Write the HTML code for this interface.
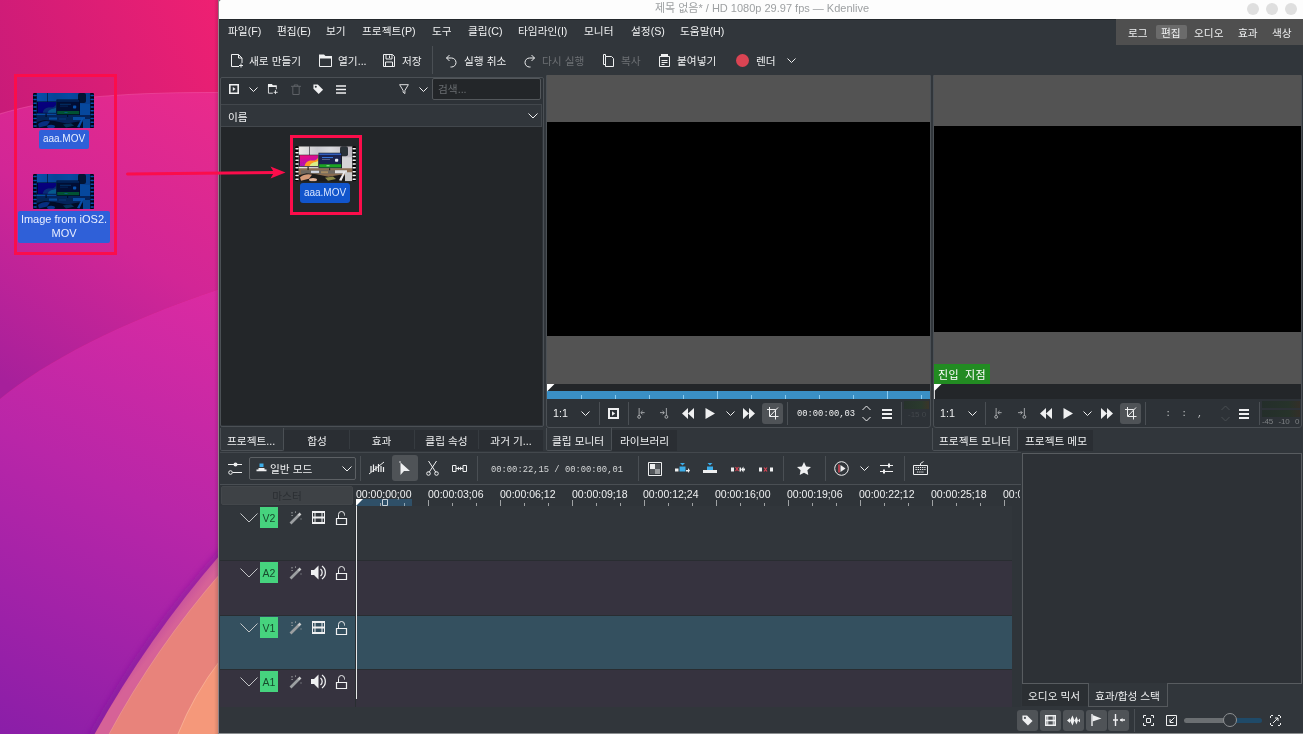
<!DOCTYPE html>
<html lang="ko">
<head>
<meta charset="utf-8">
<title>Kdenlive</title>
<style>
*{box-sizing:border-box;margin:0;padding:0}
html,body{width:1303px;height:734px;overflow:hidden;background:#31363b}
body{position:relative;font-family:"Liberation Sans","Noto Sans CJK KR",sans-serif;font-size:10.7px;color:#eff0f1}
div,span,svg{position:absolute}
svg{overflow:visible}
.t{white-space:nowrap;line-height:16px;height:16px;will-change:transform}
.dis{color:#6d7074}
.mono{font-family:"Liberation Mono","DejaVu Sans Mono",monospace;font-size:8.8px}
.sep{width:1px;background:#4a4f54}
.hl{background:#4f5357;border-radius:3px}
.frame{border:1px solid #4b5055}
.tab{height:21px;top:430px;background:#2a2e33}
.tabsel{background:#31363b;border:1px solid #4b5055;border-top:none;top:428px;height:23px;border-radius:0 0 2px 2px}
.ic{fill:none;stroke:#eff0f1;stroke-width:1}
</style>
</head>
<body>
<svg style="left:0;top:0" width="220" height="734" viewBox="0 0 220 734">
<defs>
<linearGradient id="ga" gradientUnits="userSpaceOnUse" x1="0" y1="114" x2="219" y2="0"><stop offset="0" stop-color="#c81b79"/><stop offset="1" stop-color="#ef2072"/></linearGradient>
<linearGradient id="gb" gradientUnits="userSpaceOnUse" x1="219" y1="92" x2="30" y2="399"><stop offset="0" stop-color="#ea2b8b"/><stop offset=".5" stop-color="#d22696"/><stop offset="1" stop-color="#a6209b"/></linearGradient>
<linearGradient id="gc" gradientUnits="userSpaceOnUse" x1="219" y1="289" x2="0" y2="734"><stop offset="0" stop-color="#dc2ba1"/><stop offset=".45" stop-color="#b926a8"/><stop offset="1" stop-color="#8a1ea8"/></linearGradient>
<linearGradient id="gs" gradientUnits="userSpaceOnUse" x1="140" y1="630" x2="152" y2="640"><stop offset="0" stop-color="#8a1ea0" stop-opacity="0"/><stop offset="1" stop-color="#7a1a90" stop-opacity=".55"/></linearGradient>
<linearGradient id="gp" gradientUnits="userSpaceOnUse" x1="150" y1="630" x2="163" y2="640"><stop offset="0" stop-color="#c04a9f"/><stop offset="1" stop-color="#d66297"/></linearGradient>
<filter id="b3" x="-20%" y="-20%" width="140%" height="140%"><feGaussianBlur stdDeviation="3"/></filter>
<linearGradient id="gsh" x1="0" y1="0" x2="1" y2="0"><stop offset="0" stop-color="#000" stop-opacity="0"/><stop offset="1" stop-color="#000" stop-opacity=".2"/></linearGradient>
</defs>
<rect width="220" height="734" fill="url(#ga)"/>
<path d="M0 114C40 101 110 92 220 92.500V289C120 322 45 362 0 399Z" fill="url(#gb)"/><path d="M0 114C40 101 110 92 220 92.500" fill="none" stroke="#f560b0" stroke-opacity=".45" stroke-width="1.200"/>
<path d="M0 399C45 362 120 322 220 289V734H0Z" fill="url(#gc)"/>
<path d="M222 552Q146 636 91 738" fill="none" stroke="#7c1a98" stroke-opacity=".5" stroke-width="7" filter="url(#b3)"/>
<path d="M220 555Q148 638 94.600 734H220Z" fill="url(#gp)"/>
<path d="M220 573.500Q155.500 647.500 108.700 734H220Z" fill="#ec9490"/>
<path d="M220 574.500Q156 648 109.500 734H220Z" fill="#e8837b"/>
<path d="M220 660Q193.500 694 177.500 734H220Z" fill="#f9b096"/>
<path d="M220 661Q194 695 178.500 734H220Z" fill="#f5987a"/>
<rect x="214" y="0" width="6" height="734" fill="url(#gsh)"/>
</svg>
<svg style="left:0;top:0" width="0" height="0">
<defs>
<filter id="blur" x="-5%" y="-5%" width="110%" height="110%"><feGaussianBlur stdDeviation="0.65"/></filter>
<filter id="tint" x="0" y="0" width="100%" height="100%" color-interpolation-filters="sRGB"><feColorMatrix type="matrix" values="0.03 0 0 0 0  -0.15 0.52 -0.04 0 0.01  0.30 0.08 0.26 0 0.08  0 0 0 1 0"/></filter>
<linearGradient id="mon1" x1="0" y1="0" x2="0.3" y2="1"><stop offset="0" stop-color="#f2107c"/><stop offset="1" stop-color="#a812b8"/></linearGradient>
<linearGradient id="wallg" x1="0" y1="0" x2="1" y2="0"><stop offset="0" stop-color="#ecebe8"/><stop offset=".35" stop-color="#c9c9cf"/><stop offset=".6" stop-color="#d9d9de"/><stop offset="1" stop-color="#b9b4bc"/></linearGradient>
<clipPath id="tc"><rect x="0" y="0" width="61" height="35" rx="1.500"/></clipPath>
<g id="scene" clip-path="url(#tc)">
<rect x="0" y="0" width="61" height="35" fill="#050505"/>
<g filter="url(#blur)">
<rect x="3.500" y="0" width="54" height="35" fill="url(#wallg)"/>
<rect x="14" y="0" width=".8" height="10" fill="#4a4a50"/>
<rect x="45" y="0" width="8" height="10" rx="2" fill="#2c3038"/>
<rect x="47" y="11" width="10" height="16" fill="#d4d4d6"/>
<rect x="3.500" y="22" width="54" height="13" fill="#8a6c50"/>
<rect x="4" y="8.500" width="19.500" height="12" fill="#1b1b1f"/>
<rect x="4.800" y="9" width="18.200" height="10.800" fill="url(#mon1)"/>
<path d="M9.500 19.800c1-4.500 5-6 8-5.500 2.500.3 4.500-1 5.500-2.800v8.300z" fill="#ff9a20"/>
<path d="M14.500 19.800c1.500-3 4-4 6-4 1 0 2-.5 2.500-1.200v5.200z" fill="#d8f08a"/>
<rect x="23.500" y="6.500" width="23.500" height="15.500" fill="#15181f"/>
<rect x="24.200" y="7.200" width="22" height="14" fill="#1a2450"/>
<rect x="24.200" y="7.200" width="22" height="1.500" fill="#3560c0"/>
<rect x="27" y="10.800" width="11" height="1" fill="#3a78e0"/>
<rect x="27" y="12.800" width="8" height=".6" fill="#8088a8"/>
<rect x="40" y="12.500" width="3.200" height="3" rx=".8" fill="#e8ecf4"/>
<rect x="24.200" y="18" width="22" height="3.200" fill="#1fa324"/>
<rect x="31.500" y="19" width="3" height="1" fill="#9be09c"/>
<rect x="12.500" y="20.500" width="1.200" height="3.500" fill="#222"/>
<rect x="34" y="22" width="1.200" height="3.500" fill="#222"/>
<rect x="6" y="24" width="44" height="3.500" fill="#6e6860"/>
<rect x="16" y="24.500" width="8" height="2.200" fill="#cfd6e4"/>
<rect x="26" y="25" width="7" height="2" fill="#a58a62"/>
<rect x="40" y="24" width="12" height="3" fill="#dedede"/>
<path d="M3.500 29l8-2 10 1 12 2.500 12-2 12 2v6.500h-54z" fill="#1c1c1e"/>
<path d="M5 31c3-2.500 8-4 12-2.500l-3 4-8 2z" fill="#d49a78"/>
<ellipse cx="18" cy="33.500" rx="4" ry="1.800" fill="#e0b49a"/>
<path d="M30 31.500l8-1.200 3 2.500-8 1.800z" fill="#8c8a48"/>
<path d="M44 34l5-9 1.500.5-4 9z" fill="#ececec"/>
<rect x="50" y="26" width="7" height="9" fill="#c9c9c9"/>
</g>
<rect x="0" y="0" width="3.500" height="35" fill="#050505"/>
<rect x="57.500" y="0" width="3.500" height="35" fill="#050505"/>
<path d="M1 2.600h2M1 6.400h2M1 10.200h2M1 14h2M1 17.800h2M1 21.600h2M1 25.400h2M1 29.200h2M1 33h2M58.200 2.600h2M58.200 6.400h2M58.200 10.200h2M58.200 14h2M58.200 17.800h2M58.200 21.600h2M58.200 25.400h2M58.200 29.200h2M58.200 33h2" stroke="#f4f4f4" stroke-width="1.500" stroke-linecap="round" fill="none"/>
</g>
</defs>
</svg>
<!--WALL-->
<div id="win" style="left:219px;top:0;width:1084px;height:734px;background:#31363b"></div>
<div style="left:218px;top:0;width:1px;height:734px;background:#8f8388"></div>
<div style="left:219px;top:0;width:1084px;height:19px;background:#fdfdfd;border-top-left-radius:2px"></div>
<div style="left:219px;top:19px;width:1084px;height:1px;background:#24282c"></div>
<div class="t" style="left:562px;width:400px;top:0px;text-align:center;color:#9da0a2;font-size:11px">제목 없음* / HD 1080p 29.97 fps — Kdenlive</div>
<div style="left:1247px;top:3px;width:12px;height:12px;border-radius:6px;background:#dfdfdf"></div>
<div style="left:1266px;top:3px;width:12px;height:12px;border-radius:6px;background:#dfdfdf"></div>
<div style="left:1285px;top:3px;width:12px;height:12px;border-radius:6px;background:#dfdfdf"></div>
<div class="t" style="left:228px;top:23px">파일(F)</div>
<div class="t" style="left:277px;top:23px">편집(E)</div>
<div class="t" style="left:326px;top:23px">보기</div>
<div class="t" style="left:362px;top:23px">프로젝트(P)</div>
<div class="t" style="left:432px;top:23px">도구</div>
<div class="t" style="left:468px;top:23px">클립(C)</div>
<div class="t" style="left:518px;top:23px">타임라인(I)</div>
<div class="t" style="left:584px;top:23px">모니터</div>
<div class="t" style="left:631px;top:23px">설정(S)</div>
<div class="t" style="left:680px;top:23px">도움말(H)</div>
<div style="left:1116px;top:19px;width:187px;height:26px;background:#4f4f4f"></div>
<div style="left:1156px;top:25px;width:31px;height:14px;background:#6b6b6b;border-radius:2px"></div>
<div class="t" style="left:1128px;top:25px">로그</div>
<div class="t" style="left:1161px;top:25px">편집</div>
<div class="t" style="left:1194px;top:25px">오디오</div>
<div class="t" style="left:1238px;top:25px">효과</div>
<div class="t" style="left:1272px;top:25px">색상</div>
<!--MENU-->
<svg style="left:230px;top:53px" width="14" height="15" viewBox="0 0 14 15"><path class="ic" d="M1.5 1.5h7l3.5 3.5v5M9 13.500h-7.500v-12M8.500 1.500v3.500h3.500" /><path class="ic" d="M11 10.500v4M9 12.500h4"/></svg>
<div class="t" style="left:249px;top:53px">새로 만들기</div>
<svg style="left:318px;top:53px" width="15" height="15" viewBox="0 0 15 15"><path d="M1 1.500h5l1.500 1.500h6.500v2.500h-13z" fill="#eff0f1"/><path class="ic" d="M1.500 2v11.500h12v-9.500"/></svg>
<div class="t" style="left:338px;top:53px">열기...</div>
<svg style="left:382px;top:53px" width="14" height="15" viewBox="0 0 14 15"><path class="ic" d="M1.500 1.500h9l2 2v10h-11zM4 1.500v4.500h6v-4.500M7.500 2.500v2.500M3.500 13.500v-4.500h7v4.500"/></svg>
<div class="t" style="left:402px;top:53px">저장</div>
<div class="sep" style="left:432px;top:46px;height:28px"></div>
<svg style="left:445px;top:53px" width="13" height="15" viewBox="0 0 13 15"><path class="ic" d="M4.500 2l-3 3 3 3M1.500 5h5a4.500 4.500 0 0 1 0 9h-1"/></svg>
<div class="t" style="left:464px;top:53px">실행 취소</div>
<svg style="left:523px;top:53px" width="13" height="15" viewBox="0 0 13 15"><path class="ic" d="M8.500 2l3 3-3 3M11.500 5h-5a4.500 4.500 0 0 0 0 9h1"/></svg>
<div class="t dis" style="left:542px;top:53px">다시 실행</div>
<svg style="left:602px;top:53px" width="13" height="15" viewBox="0 0 13 15"><path class="ic" d="M3.500 3.500v-2h-2v10h2M3.500 3.500h6l2 2v8h-8z"/></svg>
<div class="t dis" style="left:621px;top:53px">복사</div>
<svg style="left:658px;top:53px" width="13" height="15" viewBox="0 0 13 15"><path class="ic" d="M1.500 3.500h10v10h-10zM3.500 7.500h6M3.500 9.500h6M3.500 11.500h3"/><path d="M3 1h7v3h-7z" fill="#eff0f1"/></svg>
<div class="t" style="left:677px;top:53px">붙여넣기</div>
<div style="left:736px;top:54px;width:13px;height:13px;border-radius:7px;background:#da4453"></div>
<div class="t" style="left:756px;top:53px">렌더</div>
<svg style="left:787px;top:58px" width="9" height="6" viewBox="0 0 9 6"><path class="ic" d="M.500 .500l4 4 4-4"/></svg>
<!--TOOLBAR-->
<div class="frame" style="left:220px;top:77px;width:324px;height:350px;background:#2d3237;border-radius:2px"></div>
<svg style="left:229px;top:84px" width="10" height="10" viewBox="0 0 10 10"><path d="M.800 .800h8.400v8.400h-8.400z" fill="none" stroke="#eff0f1" stroke-width="1.600"/><path d="M3.800 3l2.800 2-2.800 2z" fill="#eff0f1"/></svg>
<svg style="left:249px;top:87px" width="9" height="6" viewBox="0 0 9 6"><path class="ic" d="M.500 .500l4 4 4-4"/></svg>
<svg style="left:267.500px;top:84px" width="10.500" height="10.500" viewBox="0 0 12 12"><path d="M0 0h4.500l1 1.500h4.500v2h-10z" fill="#eff0f1"/><path class="ic" d="M.500 1v9.500h5M9.500 3v3M8.500 7v4.500M6.500 9.500h4.500" stroke-width="1.200"/></svg>
<svg style="left:290.500px;top:84px" width="10" height="11" viewBox="0 0 11 12"><path d="M0 2.500h11M3.500 2.500v-1.500h4v1.500M2 2.500v9h7v-9" fill="none" stroke="#63676b" stroke-width="1"/></svg>
<svg style="left:312.500px;top:84px" width="10.500" height="10.500" viewBox="0 0 12 12"><path d="M.500 .500h5l6 6-5 5-6-6z" fill="#eff0f1"/><circle cx="3.200" cy="3.200" r="1.200" fill="#31363b"/></svg>
<svg style="left:336px;top:85px" width="10" height="9" viewBox="0 0 10 9"><path d="M0 1h10M0 4.500h10M0 8h10" stroke="#eff0f1" stroke-width="1.700" fill="none"/></svg>
<svg style="left:399px;top:84px" width="10" height="11" viewBox="0 0 11 12"><path class="ic" d="M.700 .700h9.600l-3.800 6.300v3.500l-2-1.500v-2z" stroke-width="1.200"/></svg>
<svg style="left:419px;top:87px" width="9" height="6" viewBox="0 0 9 6"><path class="ic" d="M.500 .500l4 4 4-4"/></svg>
<div style="left:432px;top:78px;width:109px;height:22px;background:#232629;border:1px solid #53575b;border-radius:2px"></div>
<div class="t" style="left:438px;top:81px;color:#6a6e72">검색...</div>
<div style="left:221px;top:104px;width:321px;height:23px;background:#31363b;border:1px solid #42474c;border-left:none"></div>
<div class="t" style="left:228px;top:109px">이름</div>
<svg style="left:528px;top:113px" width="10" height="6" viewBox="0 0 10 6"><path class="ic" d="M.500 .500l4.500 4.500 4.500-4.500"/></svg>
<div style="left:221px;top:127px;width:321px;height:298px;background:#232629"></div>
<!--CLIPITEM-->
<!--BIN-->
<div class="frame" style="left:546px;top:75px;width:385px;height:353px;background:#2d3237;border-radius:0 0 3px 3px"></div>
<div style="left:547px;top:75px;width:383px;height:309px;background:#535353"></div>
<div style="left:547px;top:122px;width:383px;height:214px;background:#000"></div>
<div style="left:547px;top:384px;width:383px;height:7px;background:#232629"></div>
<div style="left:547px;top:391px;width:383px;height:8px;background:#3a8fc5"></div>
<svg style="left:546px;top:384px" width="384" height="15" viewBox="0 0 384 15"><path d="M1 0h7.500l-7.500 7.500z" fill="#fff"/><path d="M35.500 11v4M69.500 11v4M103.500 11v4M137.500 11v4M171.500 7v8M205.500 11v4M239.500 11v4M273.500 11v4M307.500 11v4M341.500 7v8M375.500 11v4" stroke="#8ccbf0" stroke-width="1" fill="none"/></svg>
<div class="t" style="left:553px;top:405px">1:1</div>
<svg style="left:581px;top:411px" width="9" height="6" viewBox="0 0 9 6"><path class="ic" d="M.500 .500l4 4 4-4"/></svg>
<div class="sep" style="left:599px;top:402px;height:23px"></div>
<svg style="left:608px;top:408px" width="11" height="11" viewBox="0 0 11 11"><path d="M1 1h9v9h-9z" fill="none" stroke="#eff0f1" stroke-width="2"/><path d="M4 3.200l3.200 2.300-3.200 2.300z" fill="#eff0f1"/></svg>
<div class="sep" style="left:628px;top:402px;height:23px"></div>
<svg style="left:637px;top:407.500px" width="8.500" height="11" viewBox="0 0 10 13"><path d="M2.500 0v9" stroke="#b8babc" stroke-width="1" fill="none"/><circle cx="2.500" cy="10.500" r="1.700" fill="none" stroke="#b8babc"/><path d="M9 5.500h-4M6.500 3.500l-2 2 2 2" stroke="#b8babc" fill="none"/></svg>
<svg style="left:660px;top:407.500px" width="8.500" height="11" viewBox="0 0 10 13"><path d="M7.500 0v9" stroke="#b8babc" stroke-width="1" fill="none"/><circle cx="7.500" cy="10.500" r="1.700" fill="none" stroke="#b8babc"/><path d="M0 5.500h5M3 3.500l2 2-2 2" stroke="#b8babc" fill="none"/></svg>
<svg style="left:682px;top:408px" width="12" height="11" viewBox="0 0 12 11"><path d="M6 0v11l-6-5.500zM12 0v11l-6-5.500z" fill="#eff0f1"/></svg>
<svg style="left:705px;top:408px" width="10" height="11" viewBox="0 0 10 11"><path d="M.500 0l9.500 5.500-9.500 5.500z" fill="#eff0f1"/></svg>
<svg style="left:726px;top:411px" width="9" height="6" viewBox="0 0 9 6"><path class="ic" d="M.500 .500l4 4 4-4"/></svg>
<svg style="left:743px;top:408px" width="12" height="11" viewBox="0 0 12 11"><path d="M0 0v11l6-5.500zM6 0v11l6-5.500z" fill="#eff0f1"/></svg>
<div class="hl" style="left:762px;top:403px;width:21px;height:21px"></div>
<svg style="left:767px;top:407px" width="12" height="13" viewBox="0 0 12 13"><path class="ic" d="M2.500 0v9.500h9M0 2.500h8.500v10M11 .500l-8 8.500"/></svg>
<div class="sep" style="left:787px;top:402px;height:23px"></div>
<div class="t mono" style="left:797px;top:406px">00:00:00,03</div>
<svg style="left:862px;top:405px" width="9" height="17" viewBox="0 0 9 17"><path class="ic" d="M.500 5l4-4 4 4M.500 12l4 4 4-4"/></svg>
<svg style="left:882px;top:409px" width="10" height="10" viewBox="0 0 10 10"><path d="M0 1h10M0 5h10M0 9h10" stroke="#eff0f1" stroke-width="2" fill="none"/></svg>
<div class="sep" style="left:901px;top:402px;height:23px"></div>
<div style="left:904px;top:401px;width:25px;height:8px;background:linear-gradient(90deg,#27332c,#2a3a2d 70%,#3a3529)"></div>
<div class="t" style="left:908px;top:410px;font-size:8px;color:#43484c;line-height:10px;height:10px">-15 0</div>
<!--CLIPMON-->
<div class="frame" style="left:933px;top:75px;width:369px;height:353px;background:#2d3237;border-radius:0 0 3px 3px"></div>
<div style="left:934px;top:75px;width:367px;height:309px;background:#535353"></div>
<div style="left:934px;top:126px;width:367px;height:206px;background:#000"></div>
<div style="left:934px;top:384px;width:367px;height:15px;background:#232629"></div>
<div style="left:934px;top:364px;width:56px;height:20px;background:#228b22"></div>
<div class="t" style="left:938px;top:367px;color:#fff;font-size:11px;letter-spacing:.5px;word-spacing:2.2px">진입 지점</div>
<svg style="left:934px;top:384px" width="20" height="15" viewBox="0 0 20 15"><path d="M0 0h7.500l-7.500 7.500z" fill="#fff"/><path d="M.500 7v8" stroke="#d8d9da" stroke-width="1"/></svg>
<div class="t" style="left:940px;top:405px">1:1</div>
<svg style="left:968px;top:411px" width="9" height="6" viewBox="0 0 9 6"><path class="ic" d="M.500 .500l4 4 4-4"/></svg>
<div class="sep" style="left:985px;top:402px;height:23px"></div>
<svg style="left:994px;top:407.500px" width="8.500" height="11" viewBox="0 0 10 13"><path d="M2.500 0v9" stroke="#b8babc" stroke-width="1" fill="none"/><circle cx="2.500" cy="10.500" r="1.700" fill="none" stroke="#b8babc"/><path d="M9 5.500h-4M6.500 3.500l-2 2 2 2" stroke="#b8babc" fill="none"/></svg>
<svg style="left:1018px;top:407.500px" width="8.500" height="11" viewBox="0 0 10 13"><path d="M7.500 0v9" stroke="#b8babc" stroke-width="1" fill="none"/><circle cx="7.500" cy="10.500" r="1.700" fill="none" stroke="#b8babc"/><path d="M0 5.500h5M3 3.500l2 2-2 2" stroke="#b8babc" fill="none"/></svg>
<svg style="left:1040px;top:408px" width="12" height="11" viewBox="0 0 12 11"><path d="M6 0v11l-6-5.500zM12 0v11l-6-5.500z" fill="#eff0f1"/></svg>
<svg style="left:1063px;top:408px" width="10" height="11" viewBox="0 0 10 11"><path d="M.500 0l9.500 5.500-9.500 5.500z" fill="#eff0f1"/></svg>
<svg style="left:1083px;top:411px" width="9" height="6" viewBox="0 0 9 6"><path class="ic" d="M.500 .500l4 4 4-4"/></svg>
<svg style="left:1101px;top:408px" width="12" height="11" viewBox="0 0 12 11"><path d="M0 0v11l6-5.500zM6 0v11l6-5.500z" fill="#eff0f1"/></svg>
<div class="hl" style="left:1120px;top:403px;width:21px;height:21px"></div>
<svg style="left:1125px;top:407px" width="12" height="13" viewBox="0 0 12 13"><path class="ic" d="M2.500 0v9.500h9M0 2.500h8.500v10M11 .500l-8 8.500"/></svg>
<div class="sep" style="left:1145px;top:402px;height:23px"></div>
<div class="t mono" style="left:1155px;top:406px;color:#c5c7c9;white-space:pre">  :  :  ,  </div>
<svg style="left:1221px;top:405px" width="9" height="17" viewBox="0 0 9 17"><path d="M.500 5l4-4 4 4M.500 12l4 4 4-4" fill="none" stroke="#4a4f53"/></svg>
<svg style="left:1239px;top:409px" width="10" height="10" viewBox="0 0 10 10"><path d="M0 1h10M0 5h10M0 9h10" stroke="#eff0f1" stroke-width="2" fill="none"/></svg>
<div class="sep" style="left:1259px;top:402px;height:23px"></div>
<div style="left:1262px;top:401px;width:38px;height:7px;background:linear-gradient(90deg,#242e2a,#26332a 70%,#332f28)"></div>
<div style="left:1262px;top:410px;width:38px;height:7px;background:linear-gradient(90deg,#242e2a,#26332a 70%,#332f28)"></div>
<div class="t" style="left:1262px;top:417px;font-size:8px;color:#7d8083;line-height:10px;height:10px;width:38px;white-space:pre;letter-spacing:-.2px;word-spacing:3.5px">-45 -10 0</div>
<!--PROJMON-->
<div class="tab" style="left:220px;width:323px"></div>
<div class="tab tabsel" style="left:220px;width:64px"></div>
<div style="left:349px;top:430px;width:1px;height:19px;background:#363b40"></div>
<div style="left:414px;top:430px;width:1px;height:19px;background:#363b40"></div>
<div style="left:478px;top:430px;width:1px;height:19px;background:#363b40"></div>
<div class="t" style="left:227px;top:433px">프로젝트...</div>
<div class="t" style="left:284px;width:66px;text-align:center;top:433px">합성</div>
<div class="t" style="left:349px;width:65px;text-align:center;top:433px">효과</div>
<div class="t" style="left:414px;width:65px;text-align:center;top:433px">클립 속성</div>
<div class="t" style="left:479px;width:64px;text-align:center;top:433px">과거 기...</div>
<div class="tab" style="left:546px;width:131px"></div>
<div class="tab tabsel" style="left:546px;width:66px"></div>
<div class="t" style="left:552px;top:433px">클립 모니터</div>
<div class="t" style="left:620px;top:433px">라이브러리</div>
<div class="tab" style="left:932px;width:161px"></div>
<div class="tab tabsel" style="left:932px;width:86px"></div>
<div class="t" style="left:939px;top:433px">프로젝트 모니터</div>
<div class="t" style="left:1025px;top:433px">프로젝트 메모</div>
<!--TABS-->
<div style="left:220px;top:452px;width:801px;height:1px;background:#43484d"></div>
<div style="left:220px;top:484px;width:801px;height:1px;background:#4a4f54"></div>
<svg style="left:228px;top:462px" width="14" height="13" viewBox="0 0 14 13"><path class="ic" d="M0 2.500h14M4.500 10.500h9.500" /><circle cx="7.500" cy="2.500" r="2" fill="#eff0f1"/><circle cx="2.500" cy="10.500" r="1.800" class="ic"/></svg>
<div style="left:249px;top:457px;width:107px;height:23px;border:1px solid #5c6064;border-radius:2px;background:#31363b"></div>
<svg style="left:256px;top:463px" width="11" height="10" viewBox="0 0 11 10"><path d="M3.500 .500h4v3.500h-4z" fill="#3daee9"/><path d="M2.500 5h6v1.500h2v1.800h-10v-1.800h2z" fill="#eff0f1"/></svg>
<div class="t" style="left:270px;top:461px">일반 모드</div>
<svg style="left:342px;top:466px" width="10" height="6" viewBox="0 0 10 6"><path class="ic" d="M.500 .500l4.500 4.500 4.500-4.500"/></svg>
<div class="sep" style="left:360px;top:456px;height:25px"></div>
<svg style="left:369px;top:461px" width="16" height="14" viewBox="0 0 16 14"><path d="M0 13l15-12" class="ic"/><path d="M2 5v6M4.500 3.500v7.500M7 5v5M9.500 3v8M12 5v6M14.500 6v5" stroke="#eff0f1" fill="none" stroke-width="1.200"/></svg>
<div class="hl" style="left:392px;top:455px;width:26px;height:26px"></div>
<svg style="left:399px;top:461px" width="12" height="15" viewBox="0 0 12 15"><path d="M1.500 1.500v12.500l3.500-4h6z" fill="#eff0f1"/><circle cx="1" cy="1" r=".8" fill="#eff0f1"/></svg>
<svg style="left:426px;top:461px" width="13" height="15" viewBox="0 0 13 15"><path class="ic" d="M2.500 0l7.500 11.500M10.500 0l-7.500 11.500"/><circle cx="2.500" cy="12.500" r="1.800" class="ic"/><circle cx="10.500" cy="12.500" r="1.800" class="ic"/></svg>
<svg style="left:452px;top:464px" width="15" height="9" viewBox="0 0 15 9"><path class="ic" d="M.500 1.500h3.500v6h-3.500zM11 1.500h3.500v6h-3.500zM4 4.500h7"/><path d="M5 4.500l2-2v4zM10 4.500l-2-2v4z" fill="#eff0f1"/></svg>
<div class="sep" style="left:477px;top:456px;height:25px"></div>
<div class="t mono" style="left:491px;top:462px;color:#d5d7d8">00:00:22,15 / 00:00:00,01</div>
<div class="sep" style="left:638px;top:456px;height:25px"></div>
<svg style="left:648px;top:462px" width="14" height="14" viewBox="0 0 14 14"><path d="M.500 .500h13v13h-13z" class="ic"/><path d="M2 2h5v5h-5z" fill="#eff0f1"/><path d="M7 7h5v5h-5z" fill="#9a9d9f"/><path d="M7 2h5v5h-5zM2 7h5v5h-5z" fill="#54585c"/></svg>
<svg style="left:675px;top:463px" width="15" height="12" viewBox="0 0 15 12"><path d="M5 0h5l-2.500 2.500z" fill="#3daee9"/><path d="M4.500 3.500h6v5h-6z" fill="#3daee9"/><path d="M0 5.500h3.500v3h-3.500z" fill="#eff0f1"/><path d="M11 7h2v-2l2 2.500-2 2.500v-1.500h-2z" fill="#eff0f1"/></svg>
<svg style="left:703px;top:463px" width="14" height="12" viewBox="0 0 14 12"><path d="M4.500 0h5l-2.500 2.500z" fill="#3daee9"/><path d="M4 3.500h6v4h-6z" fill="#3daee9"/><path d="M0 7h14v3h-14z" fill="#eff0f1"/></svg>
<svg style="left:731px;top:466px" width="14" height="7" viewBox="0 0 14 7"><path d="M0 1.500h3v4h-3z" fill="#eff0f1"/><path d="M10 3.500l2.500-3v2h1.500v2h-1.500v2z" fill="#eff0f1"/><path d="M4.500 1l3 4M7.500 1l-3 4" stroke="#da4453" stroke-width="1.200" fill="none"/><path d="M8.500 1.500h1.500v4h-1.500z" fill="#eff0f1"/></svg>
<svg style="left:759px;top:466px" width="14" height="7" viewBox="0 0 14 7"><path d="M0 1.500h3v4h-3zM11 1.500h3v4h-3z" fill="#eff0f1"/><path d="M5 1.500l3 4M8 1.500l-3 4" stroke="#da4453" stroke-width="1.200" fill="none"/></svg>
<div class="sep" style="left:783px;top:456px;height:25px"></div>
<svg style="left:797px;top:462px" width="14" height="13" viewBox="0 0 14 13"><path d="M7 0l2.100 4.400 4.900.6-3.600 3.300.9 4.700-4.300-2.300-4.300 2.300.9-4.700-3.600-3.300 4.900-.6z" fill="#eff0f1"/></svg>
<div class="sep" style="left:825px;top:456px;height:25px"></div>
<svg style="left:834px;top:461px" width="15" height="15" viewBox="0 0 15 15"><circle cx="7.500" cy="7.500" r="6.800" class="ic"/><path d="M5 3.500v8" stroke="#da4453" stroke-width="1.500"/><path d="M6.500 4l5 3.500-5 3.500z" fill="#eff0f1"/></svg>
<svg style="left:860px;top:466px" width="9" height="6" viewBox="0 0 9 6"><path class="ic" d="M.500 .500l4 4 4-4"/></svg>
<svg style="left:880px;top:462px" width="13" height="13" viewBox="0 0 13 13"><path class="ic" d="M0 3.500h13M0 9.500h13"/><path d="M9 1.500v4M4 7.500v4" stroke="#eff0f1" stroke-width="2"/></svg>
<div class="sep" style="left:904px;top:456px;height:25px"></div>
<svg style="left:913px;top:461px" width="15" height="14" viewBox="0 0 15 14"><path class="ic" d="M.500 4.500h14v9h-14zM7.500 4.500v-2l3-2"/><path d="M2.500 6.500h10M2.500 8.500h10M4 11h7" stroke="#eff0f1" stroke-dasharray="1.300 .9" fill="none"/></svg>
<!--TLTOOLBAR-->
<div style="left:220px;top:485px;width:801px;height:248px;background:#2f3439"></div>
<div style="left:221px;top:486px;width:132px;height:19px;background:#3e4246;border:1px solid #43474b;border-radius:2px"></div>
<div class="t" style="left:221px;width:132px;text-align:center;top:488px;color:#2b2f33">마스터</div>
<div style="left:356px;top:499px;width:56px;height:7px;background:#2f5068"></div>
<div style="left:355px;top:485px;width:665px;height:21px;overflow:hidden">
<span class="t" style="left:0.6px;top:1px;font-size:10.5px">00:00:00;00</span>
<span class="t" style="left:72.5px;top:1px;font-size:10.5px">00:00:03;06</span>
<span class="t" style="left:144.5px;top:1px;font-size:10.5px">00:00:06;12</span>
<span class="t" style="left:216.5px;top:1px;font-size:10.5px">00:00:09;18</span>
<span class="t" style="left:288.4px;top:1px;font-size:10.5px">00:00:12;24</span>
<span class="t" style="left:360.4px;top:1px;font-size:10.5px">00:00:16;00</span>
<span class="t" style="left:432.3px;top:1px;font-size:10.5px">00:00:19;06</span>
<span class="t" style="left:504.3px;top:1px;font-size:10.5px">00:00:22;12</span>
<span class="t" style="left:576.2px;top:1px;font-size:10.5px">00:00:25;18</span>
<span class="t" style="left:648.2px;top:1px;font-size:10.5px">00:00:28;24</span>
</div>
<svg style="left:0;top:0" width="1303" height="734" viewBox="0 0 1303 734"><path d="M380.5 503v3M404.5 503v3M428.5 500v6M452.5 503v3M476.5 503v3M500.5 500v6M524.5 503v3M548.5 503v3M572.5 500v6M596.5 503v3M620.5 503v3M644.5 500v6M668.5 503v3M692.5 503v3M716.5 500v6M740.5 503v3M764.5 503v3M788.5 500v6M812.5 503v3M836.5 503v3M860.5 500v6M884.5 503v3M908.5 503v3M932.5 500v6M956.5 503v3M980.5 503v3M1004.5 500v6" stroke="#9fa2a4" stroke-width="1" fill="none"/><path d="M356 499h7l-7 7z" fill="#fff"/><path d="M382.500 499.500h5v6h-5z" fill="none" stroke="#c9d3da" stroke-width="1"/><path d="M404.500 503v3" stroke="#8fa6b5"/></svg>
<div style="left:220px;top:506px;width:792px;height:55px;background:#31363b"></div>
<div style="left:220px;top:560px;width:792px;height:1px;background:#292d31"></div>
<svg style="left:240px;top:513px" width="18" height="10" viewBox="0 0 18 10"><path d="M.500 .500l8.500 8.500 8.500-8.500" fill="none" stroke="#c3c5c7" stroke-width="1"/></svg>
<div style="left:260px;top:507px;width:18px;height:21px;background:#46d37e"></div>
<div class="t" style="left:260px;width:18px;text-align:center;top:510px;color:#174a2d;font-size:10.5px">V2</div>
<svg style="left:289px;top:511px" width="14" height="14" viewBox="0 0 14 14"><path d="M1.500 12.500l8-8" stroke="#9c9fa1" stroke-width="2.600" fill="none"/><path d="M9.300 4.700l2.200-2.200" stroke="#c9cbcc" stroke-width="2.600" fill="none"/><path d="M3 1v1.500M6.500 .500v1.200M2.500 4.500h1.200M12 7.500v1" stroke="#a5a8aa" stroke-width="1" fill="none"/></svg>
<svg style="left:312px;top:511px" width="13" height="13" viewBox="0 0 13 13"><path d="M0 0h13v2h-13zM0 5.500h13v2h-13zM0 11h13v2h-13z" fill="#eff0f1"/><path d="M.500 0v13M12.500 0v13M3 0v13M10 0v13" stroke="#eff0f1" stroke-width="1" fill="none"/></svg>
<svg style="left:336px;top:511px" width="11" height="14" viewBox="0 0 11 14"><path d="M.500 7.500h10v6h-10z" fill="none" stroke="#eff0f1" stroke-width="1.200"/><path d="M2.500 7.500v-4a3 3 0 0 1 6 0v1" fill="none" stroke="#eff0f1" stroke-width="1"/></svg>
<div style="left:220px;top:561px;width:792px;height:54px;background:#36333f"></div>
<div style="left:220px;top:615px;width:792px;height:1px;background:#292d31"></div>
<svg style="left:240px;top:568px" width="18" height="10" viewBox="0 0 18 10"><path d="M.500 .500l8.500 8.500 8.500-8.500" fill="none" stroke="#c3c5c7" stroke-width="1"/></svg>
<div style="left:260px;top:562px;width:18px;height:21px;background:#46d37e"></div>
<div class="t" style="left:260px;width:18px;text-align:center;top:565px;color:#174a2d;font-size:10.5px">A2</div>
<svg style="left:289px;top:566px" width="14" height="14" viewBox="0 0 14 14"><path d="M1.500 12.500l8-8" stroke="#9c9fa1" stroke-width="2.600" fill="none"/><path d="M9.300 4.700l2.200-2.200" stroke="#c9cbcc" stroke-width="2.600" fill="none"/><path d="M3 1v1.500M6.500 .500v1.200M2.500 4.500h1.200M12 7.500v1" stroke="#a5a8aa" stroke-width="1" fill="none"/></svg>
<svg style="left:311px;top:565px" width="16" height="15" viewBox="0 0 16 15"><path d="M0 5h3l4.500-4.500v14l-4.500-4.500h-3z" fill="#eff0f1"/><path d="M9.500 4a4.500 4.500 0 0 1 0 7" fill="none" stroke="#eff0f1" stroke-width="1.300"/><path d="M11 1a8 8 0 0 1 0 13" fill="none" stroke="#eff0f1" stroke-width="1.300"/></svg>
<svg style="left:336px;top:566px" width="11" height="14" viewBox="0 0 11 14"><path d="M.500 7.500h10v6h-10z" fill="none" stroke="#eff0f1" stroke-width="1.200"/><path d="M2.500 7.500v-4a3 3 0 0 1 6 0v1" fill="none" stroke="#eff0f1" stroke-width="1"/></svg>
<div style="left:220px;top:616px;width:792px;height:54px;background:#34505f"></div>
<div style="left:220px;top:669px;width:792px;height:1px;background:#292d31"></div>
<svg style="left:240px;top:623px" width="18" height="10" viewBox="0 0 18 10"><path d="M.500 .500l8.500 8.500 8.500-8.500" fill="none" stroke="#c3c5c7" stroke-width="1"/></svg>
<div style="left:260px;top:617px;width:18px;height:21px;background:#46d37e"></div>
<div class="t" style="left:260px;width:18px;text-align:center;top:620px;color:#174a2d;font-size:10.5px">V1</div>
<svg style="left:289px;top:621px" width="14" height="14" viewBox="0 0 14 14"><path d="M1.500 12.500l8-8" stroke="#9c9fa1" stroke-width="2.600" fill="none"/><path d="M9.300 4.700l2.200-2.200" stroke="#c9cbcc" stroke-width="2.600" fill="none"/><path d="M3 1v1.500M6.500 .500v1.200M2.500 4.500h1.200M12 7.500v1" stroke="#a5a8aa" stroke-width="1" fill="none"/></svg>
<svg style="left:312px;top:621px" width="13" height="13" viewBox="0 0 13 13"><path d="M0 0h13v2h-13zM0 5.500h13v2h-13zM0 11h13v2h-13z" fill="#eff0f1"/><path d="M.500 0v13M12.500 0v13M3 0v13M10 0v13" stroke="#eff0f1" stroke-width="1" fill="none"/></svg>
<svg style="left:336px;top:621px" width="11" height="14" viewBox="0 0 11 14"><path d="M.500 7.500h10v6h-10z" fill="none" stroke="#eff0f1" stroke-width="1.200"/><path d="M2.500 7.500v-4a3 3 0 0 1 6 0v1" fill="none" stroke="#eff0f1" stroke-width="1"/></svg>
<div style="left:220px;top:670px;width:792px;height:37px;background:#36333f"></div>

<svg style="left:240px;top:677px" width="18" height="10" viewBox="0 0 18 10"><path d="M.500 .500l8.500 8.500 8.500-8.500" fill="none" stroke="#c3c5c7" stroke-width="1"/></svg>
<div style="left:260px;top:671px;width:18px;height:21px;background:#46d37e"></div>
<div class="t" style="left:260px;width:18px;text-align:center;top:674px;color:#174a2d;font-size:10.5px">A1</div>
<svg style="left:289px;top:675px" width="14" height="14" viewBox="0 0 14 14"><path d="M1.500 12.500l8-8" stroke="#9c9fa1" stroke-width="2.600" fill="none"/><path d="M9.300 4.700l2.200-2.200" stroke="#c9cbcc" stroke-width="2.600" fill="none"/><path d="M3 1v1.500M6.500 .500v1.200M2.500 4.500h1.200M12 7.500v1" stroke="#a5a8aa" stroke-width="1" fill="none"/></svg>
<svg style="left:311px;top:674px" width="16" height="15" viewBox="0 0 16 15"><path d="M0 5h3l4.500-4.500v14l-4.500-4.500h-3z" fill="#eff0f1"/><path d="M9.500 4a4.500 4.500 0 0 1 0 7" fill="none" stroke="#eff0f1" stroke-width="1.300"/><path d="M11 1a8 8 0 0 1 0 13" fill="none" stroke="#eff0f1" stroke-width="1.300"/></svg>
<svg style="left:336px;top:675px" width="11" height="14" viewBox="0 0 11 14"><path d="M.500 7.500h10v6h-10z" fill="none" stroke="#eff0f1" stroke-width="1.200"/><path d="M2.500 7.500v-4a3 3 0 0 1 6 0v1" fill="none" stroke="#eff0f1" stroke-width="1"/></svg>
<div style="left:355px;top:506px;width:1px;height:201px;background:#2a2e32"></div>
<div style="left:356px;top:506px;width:1px;height:193px;background:#e6e7e8"></div>
<div style="left:220px;top:707px;width:801px;height:26px;background:#31363b"></div>
<!--TIMELINE-->
<div style="left:1022px;top:453px;width:280px;height:231px;background:#2d3136;border:1px solid #585c60"></div>
<div style="left:1022px;top:684px;width:66px;height:22px;background:#2b2f33"></div>
<div style="left:1088px;top:683px;width:80px;height:24px;background:#31363b;border:1px solid #55595d;border-top:none"></div>
<div class="t" style="left:1028px;top:688px">오디오 믹서</div>
<div class="t" style="left:1095px;top:688px">효과/합성 스택</div>
<!--RIGHTPANEL-->
<div style="left:1021px;top:707px;width:282px;height:26px;background:#31363b"></div>
<div class="hl" style="left:1017px;top:710px;width:21px;height:21px"></div>
<div class="hl" style="left:1040px;top:710px;width:21px;height:21px"></div>
<div class="hl" style="left:1063px;top:710px;width:21px;height:21px"></div>
<div class="hl" style="left:1086px;top:710px;width:21px;height:21px"></div>
<div class="hl" style="left:1108px;top:710px;width:21px;height:21px"></div>
<svg style="left:1022px;top:715px" width="11" height="11" viewBox="0 0 12 12"><path d="M.500 .500h5l6 6-5 5-6-6z" fill="#eff0f1"/><circle cx="3.200" cy="3.200" r="1.200" fill="#4f5357"/></svg>
<svg style="left:1045px;top:715px" width="11" height="11" viewBox="0 0 14 14"><path d="M1 1h12v12h-12zM1 7h12" fill="none" stroke="#eff0f1" stroke-width="2"/><path d="M3.500 1v12M10.500 1v12" stroke="#eff0f1" stroke-width="1.200" fill="none"/></svg>
<svg style="left:1067px;top:715px" width="13" height="11" viewBox="0 0 13 11"><path d="M0 5.500l3-2.500v5zM3 5.500l2.500-5 2 5-2 5zM7.500 5.500l2-4 1.500 4-1.500 4zM11 5.500l2-2v4z" fill="#eff0f1"/></svg>
<svg style="left:1091px;top:714px" width="11" height="12" viewBox="0 0 11 12"><path d="M1 0v12" stroke="#eff0f1" stroke-width="1.400"/><path d="M1.500 1l9 3.500-9 3z" fill="#eff0f1"/></svg>
<svg style="left:1112px;top:714px" width="13" height="12" viewBox="0 0 13 12"><path d="M3.500 0v12" stroke="#eff0f1" stroke-width="1.400"/><path d="M1 6h5M8 6h5" stroke="#eff0f1" stroke-width="1.400"/><path d="M8 6l2.500-2v4z" fill="#eff0f1"/></svg>
<div class="sep" style="left:1134px;top:709px;height:23px"></div>
<svg style="left:1143px;top:715px" width="11" height="11" viewBox="0 0 11 11"><path d="M.500 3v-2.500h2.500M8 .500h2.500v2.500M10.500 8v2.500h-2.500M3 10.500h-2.500v-2.500" class="ic"/><path d="M3.500 3.500h4v4h-4z" class="ic"/></svg>
<svg style="left:1166px;top:715px" width="11" height="11" viewBox="0 0 11 11"><path d="M.500 .500h10v10h-10z" class="ic"/><path d="M8.500 2.500l-4.500 4.500M4 4v3.500h3.500" class="ic"/></svg>
<div style="left:1184px;top:718px;width:46px;height:5px;border-radius:3px;background:#6b6f72"></div>
<div style="left:1230px;top:718px;width:32px;height:5px;border-radius:3px;background:#1f4a68"></div>
<div style="left:1223px;top:713px;width:14px;height:14px;border-radius:7px;background:#31363b;border:1px solid #8e9193"></div>
<svg style="left:1270px;top:715px" width="11" height="11" viewBox="0 0 11 11"><path d="M.500 3v-2.500h2.500M8 .500h2.500v2.500M10.500 8v2.500h-2.500M3 10.500h-2.500v-2.500" class="ic" stroke-dasharray="2 1"/><path d="M3 8l5-5M5 3h3v3" class="ic"/></svg>
<div style="left:219px;top:733px;width:1084px;height:1px;background:#8b8e90"></div>
<!--STATUS-->
<svg style="left:0;top:0" width="130" height="270" viewBox="0 0 130 270"><rect x="15.500" y="75.500" width="100" height="178" fill="none" stroke="#fb0d4b" stroke-width="3"/></svg>
<svg style="left:33px;top:93px" width="61" height="35" viewBox="0 0 61 35"><use href="#scene" filter="url(#tint)"/></svg>
<div style="left:39px;top:130px;width:50px;height:19px;background:#2f60d8;border-radius:2px"></div>
<div class="t" style="left:39px;width:50px;text-align:center;top:131px;color:#e8eeff;font-size:10px">aaa.MOV</div>
<svg style="left:33px;top:174px" width="61" height="35" viewBox="0 0 61 35"><use href="#scene" filter="url(#tint)"/></svg>
<div style="left:18px;top:211px;width:92px;height:32px;background:#2f60d8;border-radius:2px"></div>
<div class="t" style="left:18px;width:92px;text-align:center;top:212px;color:#e8eeff;font-size:11px;line-height:14px;height:28px;white-space:normal">Image from iOS2.<br>MOV</div>
<svg style="left:0;top:0" width="400" height="300" viewBox="0 0 400 300"><path d="M127.500 174L276 172.600" stroke="#fb0d4b" stroke-width="3" stroke-linecap="round" fill="none"/><path d="M285.500 172.500l-15-6 3.500 6-3.500 6z" fill="#fb0d4b"/></svg>
<div style="left:290px;top:135px;width:72px;height:80px;border:3px solid #fb0d4b"></div>
<svg style="left:295px;top:146px" width="61" height="35.500" viewBox="0 0 61 35"><use href="#scene"/></svg>
<div style="left:300px;top:183px;width:50px;height:20px;background:#1155cc;border-radius:3px"></div>
<div class="t" style="left:300px;width:50px;text-align:center;top:185px;color:#d6e4ff;font-size:10px">aaa.MOV</div>
<!--DESKTOP-->
</body>
</html>
